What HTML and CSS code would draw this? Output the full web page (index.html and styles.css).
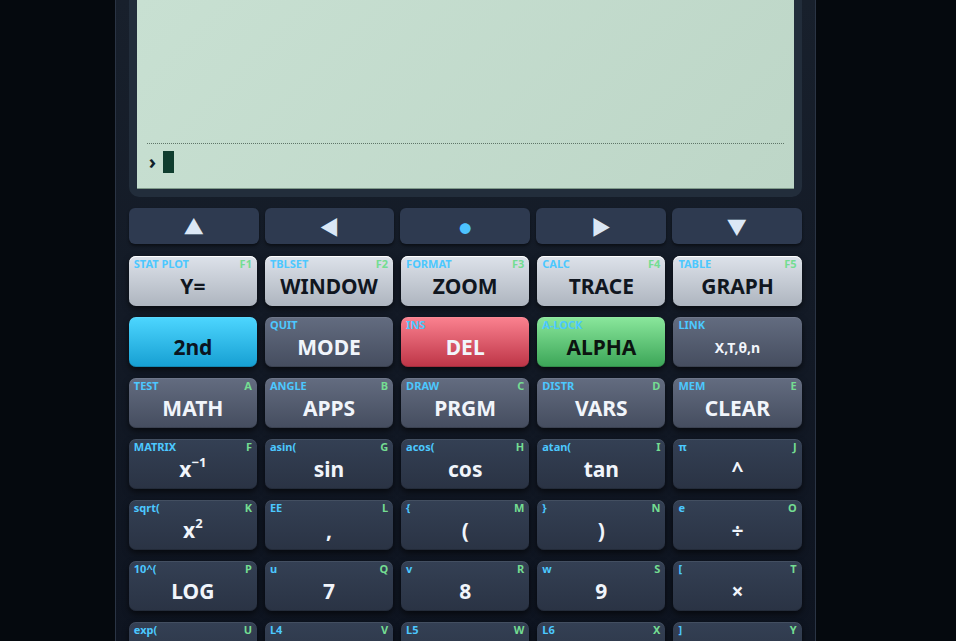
FILE: index.html
```
<!DOCTYPE html>
<html lang="en">
<head>
<meta charset="utf-8">
<title>Calculator</title>
<link rel="stylesheet" href="styles.css">
</head>
<body>
<main class="calc">
  <section class="bezel">
    <div class="screen">
      <div class="history"></div>
      <div class="input"><span class="prompt">›</span><span class="cursor"></span></div>
    </div>
  </section>
  <nav class="nav">
    <button class="nkey">▲</button>
    <button class="nkey">◀</button>
    <button class="nkey dot">●</button>
    <button class="nkey">▶</button>
    <button class="nkey">▼</button>
  </nav>
  <section class="keys">
    <button class="key light"><span class="sec">STAT PLOT</span><span class="alp">F1</span><span class="main">Y=</span></button>
    <button class="key light"><span class="sec">TBLSET</span><span class="alp">F2</span><span class="main">WINDOW</span></button>
    <button class="key light"><span class="sec">FORMAT</span><span class="alp">F3</span><span class="main">ZOOM</span></button>
    <button class="key light"><span class="sec">CALC</span><span class="alp">F4</span><span class="main">TRACE</span></button>
    <button class="key light"><span class="sec">TABLE</span><span class="alp">F5</span><span class="main">GRAPH</span></button>

    <button class="key second"><span class="main">2nd</span></button>
    <button class="key grey"><span class="sec">QUIT</span><span class="main">MODE</span></button>
    <button class="key red"><span class="sec">INS</span><span class="main">DEL</span></button>
    <button class="key green"><span class="sec">A-LOCK</span><span class="main">ALPHA</span></button>
    <button class="key grey"><span class="sec">LINK</span><span class="main small">X,T,θ,n</span></button>

    <button class="key grey"><span class="sec">TEST</span><span class="alp">A</span><span class="main">MATH</span></button>
    <button class="key grey"><span class="sec">ANGLE</span><span class="alp">B</span><span class="main">APPS</span></button>
    <button class="key grey"><span class="sec">DRAW</span><span class="alp">C</span><span class="main">PRGM</span></button>
    <button class="key grey"><span class="sec">DISTR</span><span class="alp">D</span><span class="main">VARS</span></button>
    <button class="key grey"><span class="sec">MEM</span><span class="alp">E</span><span class="main">CLEAR</span></button>

    <button class="key"><span class="sec">MATRIX</span><span class="alp">F</span><span class="main">x<sup>−1</sup></span></button>
    <button class="key"><span class="sec">asin(</span><span class="alp">G</span><span class="main">sin</span></button>
    <button class="key"><span class="sec">acos(</span><span class="alp">H</span><span class="main">cos</span></button>
    <button class="key"><span class="sec">atan(</span><span class="alp">I</span><span class="main">tan</span></button>
    <button class="key"><span class="sec">π</span><span class="alp">J</span><span class="main">^</span></button>

    <button class="key"><span class="sec">sqrt(</span><span class="alp">K</span><span class="main">x<sup>2</sup></span></button>
    <button class="key"><span class="sec">EE</span><span class="alp">L</span><span class="main">,</span></button>
    <button class="key"><span class="sec">{</span><span class="alp">M</span><span class="main">(</span></button>
    <button class="key"><span class="sec">}</span><span class="alp">N</span><span class="main">)</span></button>
    <button class="key"><span class="sec">e</span><span class="alp">O</span><span class="main">÷</span></button>

    <button class="key"><span class="sec">10^(</span><span class="alp">P</span><span class="main">LOG</span></button>
    <button class="key"><span class="sec">u</span><span class="alp">Q</span><span class="main">7</span></button>
    <button class="key"><span class="sec">v</span><span class="alp">R</span><span class="main">8</span></button>
    <button class="key"><span class="sec">w</span><span class="alp">S</span><span class="main">9</span></button>
    <button class="key"><span class="sec">[</span><span class="alp">T</span><span class="main">×</span></button>

    <button class="key partial"><span class="sec">exp(</span><span class="alp">U</span></button>
    <button class="key partial"><span class="sec">L4</span><span class="alp">V</span></button>
    <button class="key partial"><span class="sec">L5</span><span class="alp">W</span></button>
    <button class="key partial"><span class="sec">L6</span><span class="alp">X</span></button>
    <button class="key partial"><span class="sec">]</span><span class="alp">Y</span></button>
  </section>
</main>
</body>
</html>
```
FILE: styles.css
```
* { box-sizing: border-box; }
html, body { margin: 0; height: 641px; overflow: hidden; background: #05090e; }
body { display: flex; justify-content: center; padding-right: 25.6px; font-family: "Noto Sans", sans-serif; }
.calc {
  width: 700.8px; height: 641px; overflow: hidden;
  background: linear-gradient(#18202c, #0e1420);
  border-left: 1px solid #2a3444; border-right: 1px solid #2a3444;
  padding: 0 13px;
}
.bezel { height: 197px; background: #222d3b; border-radius: 0 0 10px 10px; padding: 0 8px 8px; }
.screen { height: 189px; display: flex; flex-direction: column; background: linear-gradient(135deg, #c8e0d2, #bdd6c7); border-bottom: 1px solid #7f9a8a; padding: 0 10px; }
.history { flex: 1; border-bottom: 1px dotted #5f7568; }
.input { height: 44px; display: flex; align-items: center; gap: 7px; padding: 0 2px 8px; color: #0f3d2e; font-size: 20px; font-weight: 700; }
.prompt { line-height: 1; color: #10202a; }
.cursor { width: 11px; height: 22px; background: #0f3d2e; }
.nav { display: grid; grid-template-columns: repeat(5, 1fr); gap: 6px; margin-top: 11px; }
.nkey { height: 36px; padding: 1px 0 0; border: 0; border-radius: 6px; background: #2e3a50; color: #dbe7f5; box-shadow: 0 2px 3px rgba(0,0,0,.45); display: flex; align-items: center; justify-content: center; font-size: 20px; line-height: 1; font-family: "Noto Sans CJK SC", sans-serif; }
.nkey.dot { color: #4dc3ff; font-size: 12px; padding-top: 6px; }
.keys { display: grid; grid-template-columns: repeat(5, 1fr); gap: 11px 8px; margin-top: 12px; }
.key {
  position: relative; height: 50px; padding: 0; border: 0; border-radius: 7px;
  font-family: inherit; display: flex; align-items: center; justify-content: center;
  background: linear-gradient(#344054, #2a3344); color: #f1f5fb;
  box-shadow: inset 0 1px 0 rgba(255,255,255,.08), inset 0 -1px 0 rgba(0,0,0,.15), 0 3px 6px rgba(0,0,0,.6);
}
.sec { position: absolute; left: 5px; top: 0; font-size: 11px; font-weight: 700; color: #4cc8ff; line-height: 15px; }
.alp { position: absolute; right: 5px; top: 0; font-size: 11px; font-weight: 700; color: #74dd92; line-height: 15px; }
.main { font-size: 21px; font-weight: 700; line-height: 1; margin-top: 11px; }
.main.small { font-size: 14px; }
.main sup { font-size: 13px; line-height: 0; vertical-align: 10px; }
.light { background: linear-gradient(#dde2ea, #aeb5bf); color: #10161f; box-shadow: inset 0 1px 0 #fff, 0 3px 6px rgba(0,0,0,.6); }
.grey { background: linear-gradient(#636c80, #454d5f); }
.second { background: linear-gradient(#4dd6ff, #169fd2); color: #0b1420; }
.red { background: linear-gradient(#fb8290, #bd3446); }
.green { background: linear-gradient(#8ae79c, #3ba557); color: #0c1410; }
```
